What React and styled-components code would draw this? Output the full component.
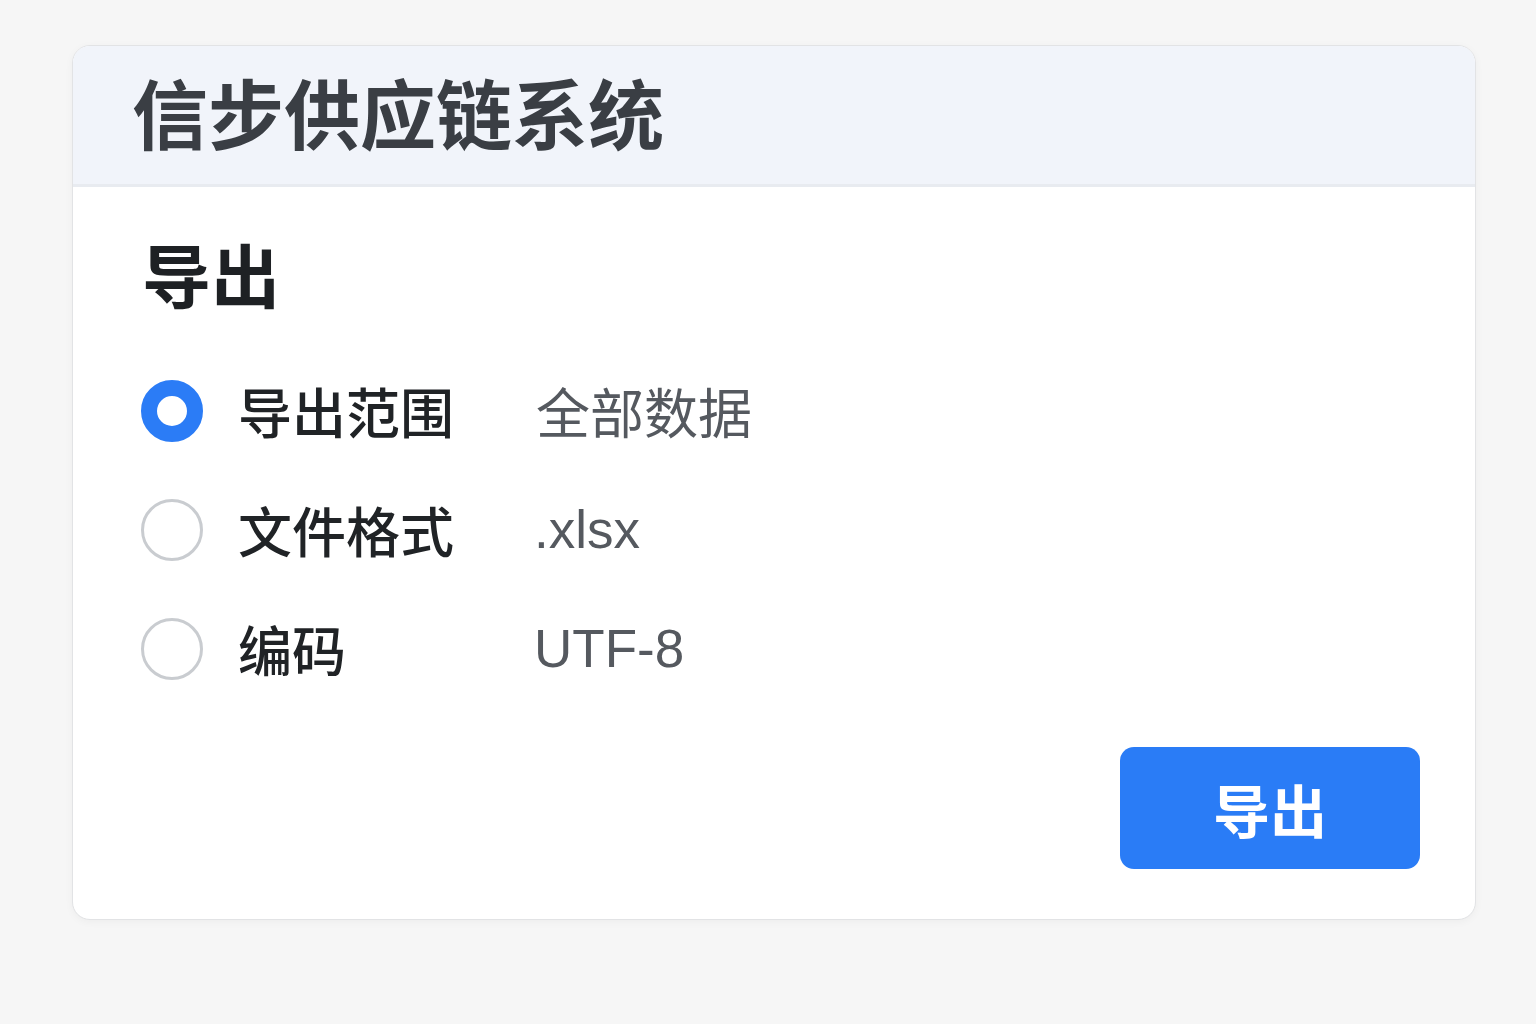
import React, { useState } from "react";
import styled, { createGlobalStyle } from "styled-components";

const GlobalStyle = createGlobalStyle`
  html, body {
    margin: 0;
    padding: 0;
    background: #f6f6f6;
    font-family: "Liberation Sans", "Noto Sans CJK SC", sans-serif;
  }
`;

export const Page = styled.div`
  width: 100%;
  min-height: 100vh;
  padding: 45px 60px 0 72px;
  box-sizing: border-box;
`;

export const Card = styled.div`
  width: 1404px;
  height: 875px;
  box-sizing: border-box;
  background: #ffffff;
  border: 1.5px solid #e2e3e5;
  border-radius: 18px;
  box-shadow: 0 2px 8px rgba(0, 0, 0, 0.04);
  overflow: hidden;
  display: flex;
  flex-direction: column;
`;

export const Header = styled.div`
  height: 141px;
  box-sizing: border-box;
  background: #f1f4fa;
  border-bottom: 3px solid #e8ebf0;
  display: flex;
  align-items: center;
  padding: 0 0 8px 59px;
`;

export const Title = styled.h1`
  margin: 0;
  font-family: "Noto Sans CJK SC", sans-serif;
  font-size: 76px;
  font-weight: 700;
  color: #3a3e44;
`;

export const Body = styled.div`
  flex: 1;
  display: flex;
  flex-direction: column;
  padding: 41px 55px 50px 68px;
`;

export const Heading = styled.h2`
  margin: 0 0 0 1px;
  font-family: "Noto Sans CJK SC", sans-serif;
  font-size: 69px;
  font-weight: 700;
  line-height: 90px;
  color: #1e2124;
`;

export const Options = styled.div`
  display: flex;
  flex-direction: column;
  margin-top: 33px;
`;

export const Row = styled.label`
  display: flex;
  align-items: center;
  height: 119px;
  cursor: pointer;
`;

export const Radio = styled.span`
  width: 62px;
  height: 62px;
  box-sizing: border-box;
  border-radius: 50%;
  background: #fff;
  border: ${(p) => (p.$checked ? "16px solid #2b7cf6" : "3px solid #c9ccd0")};
  flex-shrink: 0;
`;

export const Label = styled.span`
  width: 298px;
  margin-left: 35px;
  font-family: "Noto Sans CJK SC", sans-serif;
  font-size: 54px;
  font-weight: 500;
  color: #202326;
`;

export const Value = styled.span`
  font-family: ${(p) =>
    p.$latin ? '"Liberation Sans", sans-serif' : '"Noto Sans CJK SC", sans-serif'};
  font-size: ${(p) => (p.$latin ? "53px" : "54px")};
  color: #55595f;
  margin-left: ${(p) => (p.$latin ? "-2px" : "0")};
`;

export const Footer = styled.div`
  margin-top: auto;
  display: flex;
  justify-content: flex-end;
`;

export const ExportBtn = styled.button`
  width: 300px;
  height: 122px;
  border: none;
  border-radius: 14px;
  background: #2a7cf6;
  color: #ffffff;
  font-family: "Noto Sans CJK SC", sans-serif;
  font-size: 57px;
  font-weight: 700;
  cursor: pointer;
`;

const options = [
  { key: "range", label: "导出范围", value: "全部数据" },
  { key: "format", label: "文件格式", value: ".xlsx", latin: true },
  { key: "encoding", label: "编码", value: "UTF-8", latin: true },
];

export default function App() {
  const [selected, setSelected] = useState("range");
  return (
    <>
      <GlobalStyle />
      <Page>
        <Card>
          <Header>
            <Title>信步供应链系统</Title>
          </Header>
          <Body>
            <Heading>导出</Heading>
            <Options>
              {options.map((o) => (
                <Row key={o.key} onClick={() => setSelected(o.key)}>
                  <Radio $checked={selected === o.key} />
                  <Label>{o.label}</Label>
                  <Value $latin={o.latin}>{o.value}</Value>
                </Row>
              ))}
            </Options>
            <Footer>
              <ExportBtn>导出</ExportBtn>
            </Footer>
          </Body>
        </Card>
      </Page>
    </>
  );
}
